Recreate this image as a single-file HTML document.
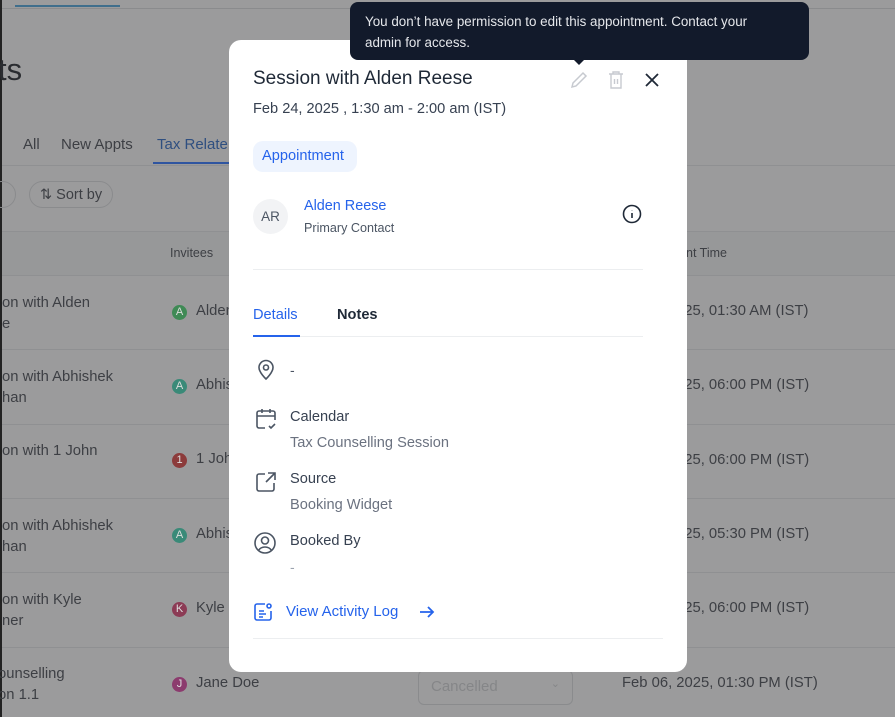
<!DOCTYPE html>
<html><head><meta charset="utf-8"><style>
*{margin:0;padding:0;box-sizing:border-box}
body{width:895px;height:717px;overflow:hidden;background:#9b9b9c;font-family:"Liberation Sans",sans-serif;position:relative}
.a{position:absolute;white-space:nowrap}
.bg{color:#3d3f44}
.line{position:absolute;height:1px;background:#8f9092}
.chip{position:absolute;width:15px;height:15px;border-radius:50%;color:#ddd;font-size:11px;text-align:center;line-height:15px}
.m{color:#1f2937}
.r{font-size:14.8px}
</style></head><body>
<div class="a" style="left:0;top:0;width:2px;height:717px;background:#222"></div>
<div class="line" style="left:2px;top:8px;width:893px;background:#8a8b8d"></div>
<div class="a" style="left:15px;top:5px;width:105px;height:2px;background:#3f6e8c"></div>
<div class="a bg" style="left:-2px;top:52px;font-size:31px;color:#2a2c30">ts</div>
<div class="a bg" style="left:23px;top:136px;font-size:15px">All</div>
<div class="a bg" style="left:61px;top:136px;font-size:15px">New Appts</div>
<div class="a" style="left:157px;top:136px;font-size:15px;color:#2f4f80">Tax Relate</div>
<div class="a" style="left:153px;top:162px;width:80px;height:2px;background:#2f55a0"></div>
<div class="line" style="left:2px;top:165px;width:893px"></div>
<div class="a" style="left:-12px;top:181px;width:28px;height:27px;border:1px solid #8a8b8d;border-radius:14px"></div>
<div class="a bg" style="left:29px;top:181px;width:84px;height:27px;border:1px solid #8a8b8d;border-radius:14px;font-size:14.5px;padding:5px 0 0 10px">⇅ Sort by</div>
<div class="line" style="left:2px;top:231px;width:893px"></div>
<div class="a" style="left:2px;top:232px;width:893px;height:43px;background:#979899"></div>
<div class="a bg" style="left:170px;top:246px;font-size:12.5px">Invitees</div>
<div class="a bg" style="left:686px;top:246px;font-size:12.5px">nt Time</div>
<div class="line" style="left:2px;top:275px;width:893px"></div>
<div class="line" style="left:2px;top:349px;width:893px"></div>
<div class="line" style="left:2px;top:424px;width:893px"></div>
<div class="line" style="left:2px;top:498px;width:893px"></div>
<div class="line" style="left:2px;top:572px;width:893px"></div>
<div class="line" style="left:2px;top:647px;width:893px"></div>

<div class="a bg r" style="left:2px;top:293px;line-height:21px">on with Alden<br>e</div>
<div class="a bg r" style="left:2px;top:367px;line-height:21px">on with Abhishek<br>han</div>
<div class="a bg r" style="left:2px;top:441px;line-height:21px">on with 1 John</div>
<div class="a bg r" style="left:2px;top:516px;line-height:21px">on with Abhishek<br>han</div>
<div class="a bg r" style="left:2px;top:590px;line-height:21px">on with Kyle<br>ner</div>
<div class="a bg r" style="left:-2px;top:664px;line-height:21px">ounselling<br>on 1.1</div>

<div class="chip" style="left:172px;top:305px;background:#3f8a55">A</div><div class="a bg r" style="left:196px;top:303px">Alden</div>
<div class="chip" style="left:172px;top:379px;background:#3a8a78">A</div><div class="a bg r" style="left:196px;top:377px">Abhis</div>
<div class="chip" style="left:172px;top:453px;background:#8c3b3b">1</div><div class="a bg r" style="left:196px;top:451px">1 Joh</div>
<div class="chip" style="left:172px;top:528px;background:#3a8a78">A</div><div class="a bg r" style="left:196px;top:526px">Abhis</div>
<div class="chip" style="left:172px;top:602px;background:#8c3b55">K</div><div class="a bg r" style="left:196px;top:600px">Kyle</div>
<div class="chip" style="left:172px;top:677px;background:#8c3b6e">J</div><div class="a bg r" style="left:196px;top:675px">Jane Doe</div>
<div class="a" style="left:418px;top:670px;width:155px;height:35px;border:1px solid #8a8b8d;border-radius:6px;color:#858688;font-size:15px;padding:7px 0 0 12px">Cancelled<span style="position:absolute;right:12px;top:6px;font-size:11px">⌄</span></div>

<div class="a bg r" style="left:676px;top:303px">025, 01:30 AM (IST)</div>
<div class="a bg r" style="left:676px;top:377px">025, 06:00 PM (IST)</div>
<div class="a bg r" style="left:676px;top:452px">025, 06:00 PM (IST)</div>
<div class="a bg r" style="left:676px;top:526px">025, 05:30 PM (IST)</div>
<div class="a bg r" style="left:676px;top:600px">025, 06:00 PM (IST)</div>
<div class="a bg r" style="left:622px;top:675px">Feb 06, 2025, 01:30 PM (IST)</div>

<!-- modal -->
<div class="a" style="left:229px;top:40px;width:458px;height:632px;background:#fff;border-radius:12px"></div>
<div class="a m" style="left:253px;top:68px;font-size:19px;font-weight:500">Session with Alden Reese</div>
<div class="a" style="left:253px;top:101px;font-size:14.6px;color:#374151">Feb 24, 2025 , 1:30 am - 2:00 am (IST)</div>
<svg class="a" style="left:569px;top:70px" width="20" height="20" viewBox="0 0 20 20" fill="none" stroke="#c7cad0" stroke-width="1.5"><path d="M3 17l1-4L14 3l3 3L7 16z"/></svg>
<svg class="a" style="left:607px;top:70px" width="18" height="20" viewBox="0 0 18 20" fill="none" stroke="#c7cad0" stroke-width="1.4"><path d="M2 4h14M6 4V2h6v2M4 4v14h10V4M7.5 9v5M10.5 9v5"/></svg>
<svg class="a" style="left:644px;top:72px" width="16" height="16" viewBox="0 0 16 16" stroke="#1f2937" stroke-width="1.8"><path d="M2 2l12 12M14 2L2 14"/></svg>
<div class="a" style="left:253px;top:141px;width:104px;height:31px;background:#eef4fe;border-radius:10px;color:#2563eb;font-size:14.6px;padding:7px 0 0 9px">Appointment</div>
<div class="a" style="left:253px;top:199px;width:35px;height:35px;border-radius:50%;background:#f2f3f5;color:#4b5563;font-size:13.5px;text-align:center;line-height:35px">AR</div>
<div class="a" style="left:304px;top:198px;font-size:14.4px;color:#2563eb;font-weight:500">Alden Reese</div>
<div class="a" style="left:304px;top:221px;font-size:12.6px;color:#4b5563">Primary Contact</div>
<svg class="a" style="left:622px;top:204px" width="20" height="20" viewBox="0 0 20 20" fill="none" stroke="#1f2937" stroke-width="1.6"><circle cx="10" cy="10" r="8.5"/><path d="M10 9v5M10 6.2v.3"/></svg>
<div class="a" style="left:253px;top:269px;width:390px;height:1px;background:#eceef0"></div>
<div class="a" style="left:253px;top:307px;font-size:14.6px;color:#2563eb;font-weight:500">Details</div>
<div class="a m" style="left:337px;top:307px;font-size:14.6px;font-weight:bold">Notes</div>
<div class="a" style="left:253px;top:336px;width:390px;height:1px;background:#eceef0"></div>
<div class="a" style="left:253px;top:335px;width:47px;height:2px;background:#2563eb"></div>
<svg class="a" style="left:254px;top:358px" width="24" height="24" viewBox="0 0 24 24" fill="none" stroke="#4b5563" stroke-width="1.6"><path d="M12 21s-7-6.5-7-11.5a7 7 0 0114 0C19 14.5 12 21 12 21z"/><circle cx="12" cy="9.5" r="2.5"/></svg>
<div class="a" style="left:290px;top:362px;font-size:14px;color:#4b5563">-</div>
<svg class="a" style="left:254px;top:407px" width="24" height="24" viewBox="0 0 24 24" fill="none" stroke="#4b5563" stroke-width="1.6"><path d="M11 21H5a2 2 0 01-2-2V6a2 2 0 012-2h14a2 2 0 012 2v7M3 9h18M8 2v4M16 2v4M15 19l2 2 4-4"/></svg>
<div class="a m" style="left:290px;top:409px;font-size:14.6px;font-weight:500;color:#374151">Calendar</div>
<div class="a" style="left:290px;top:435px;font-size:14.6px;color:#6b7280">Tax Counselling Session</div>
<svg class="a" style="left:254px;top:470px" width="24" height="24" viewBox="0 0 24 24" fill="none" stroke="#4b5563" stroke-width="1.6"><path d="M11 4H5a2 2 0 00-2 2v13a2 2 0 002 2h13a2 2 0 002-2v-6M14 3h7v7M21 3L12 12"/></svg>
<div class="a" style="left:290px;top:471px;font-size:14.6px;font-weight:500;color:#374151">Source</div>
<div class="a" style="left:290px;top:497px;font-size:14.6px;color:#6b7280">Booking Widget</div>
<svg class="a" style="left:253px;top:531px" width="24" height="24" viewBox="0 0 24 24" fill="none" stroke="#4b5563" stroke-width="1.6"><circle cx="12" cy="12" r="10"/><circle cx="12" cy="9.5" r="3.5"/><path d="M5.5 19.5c1.5-2.5 4-3.5 6.5-3.5s5 1 6.5 3.5"/></svg>
<div class="a" style="left:290px;top:533px;font-size:14.6px;font-weight:500;color:#374151">Booked By</div>
<div class="a" style="left:290px;top:559px;font-size:14px;color:#9ca3af">-</div>
<svg class="a" style="left:253px;top:602px" width="20" height="20" viewBox="0 0 20 20" fill="none" stroke="#2563eb" stroke-width="1.6"><path d="M12 2H4a2 2 0 00-2 2v12a2 2 0 002 2h12a2 2 0 002-2V9"/><circle cx="16" cy="4" r="2"/><path d="M6 9h5M6 12h7M6 15h4"/></svg>
<div class="a" style="left:286px;top:603px;font-size:15px;color:#2563eb;font-weight:500">View Activity Log</div>
<svg class="a" style="left:418px;top:603px" width="18" height="18" viewBox="0 0 18 18" fill="none" stroke="#2563eb" stroke-width="1.8"><path d="M2 9h13M10 4l5 5-5 5"/></svg>
<div class="a" style="left:253px;top:638px;width:410px;height:1px;background:#eceef0"></div>

<!-- tooltip -->
<div class="a" style="left:350px;top:2px;width:459px;height:58px;background:#121a2b;border-radius:8px;color:#e5e7eb;font-size:13.4px;line-height:21px;padding:9px 30px 9px 15px;white-space:normal">You don’t have permission to edit this appointment. Contact your admin for access.</div>
<div class="a" style="left:573px;top:59px;width:0;height:0;border-left:6px solid transparent;border-right:6px solid transparent;border-top:6px solid #121a2b"></div>
</body></html>
